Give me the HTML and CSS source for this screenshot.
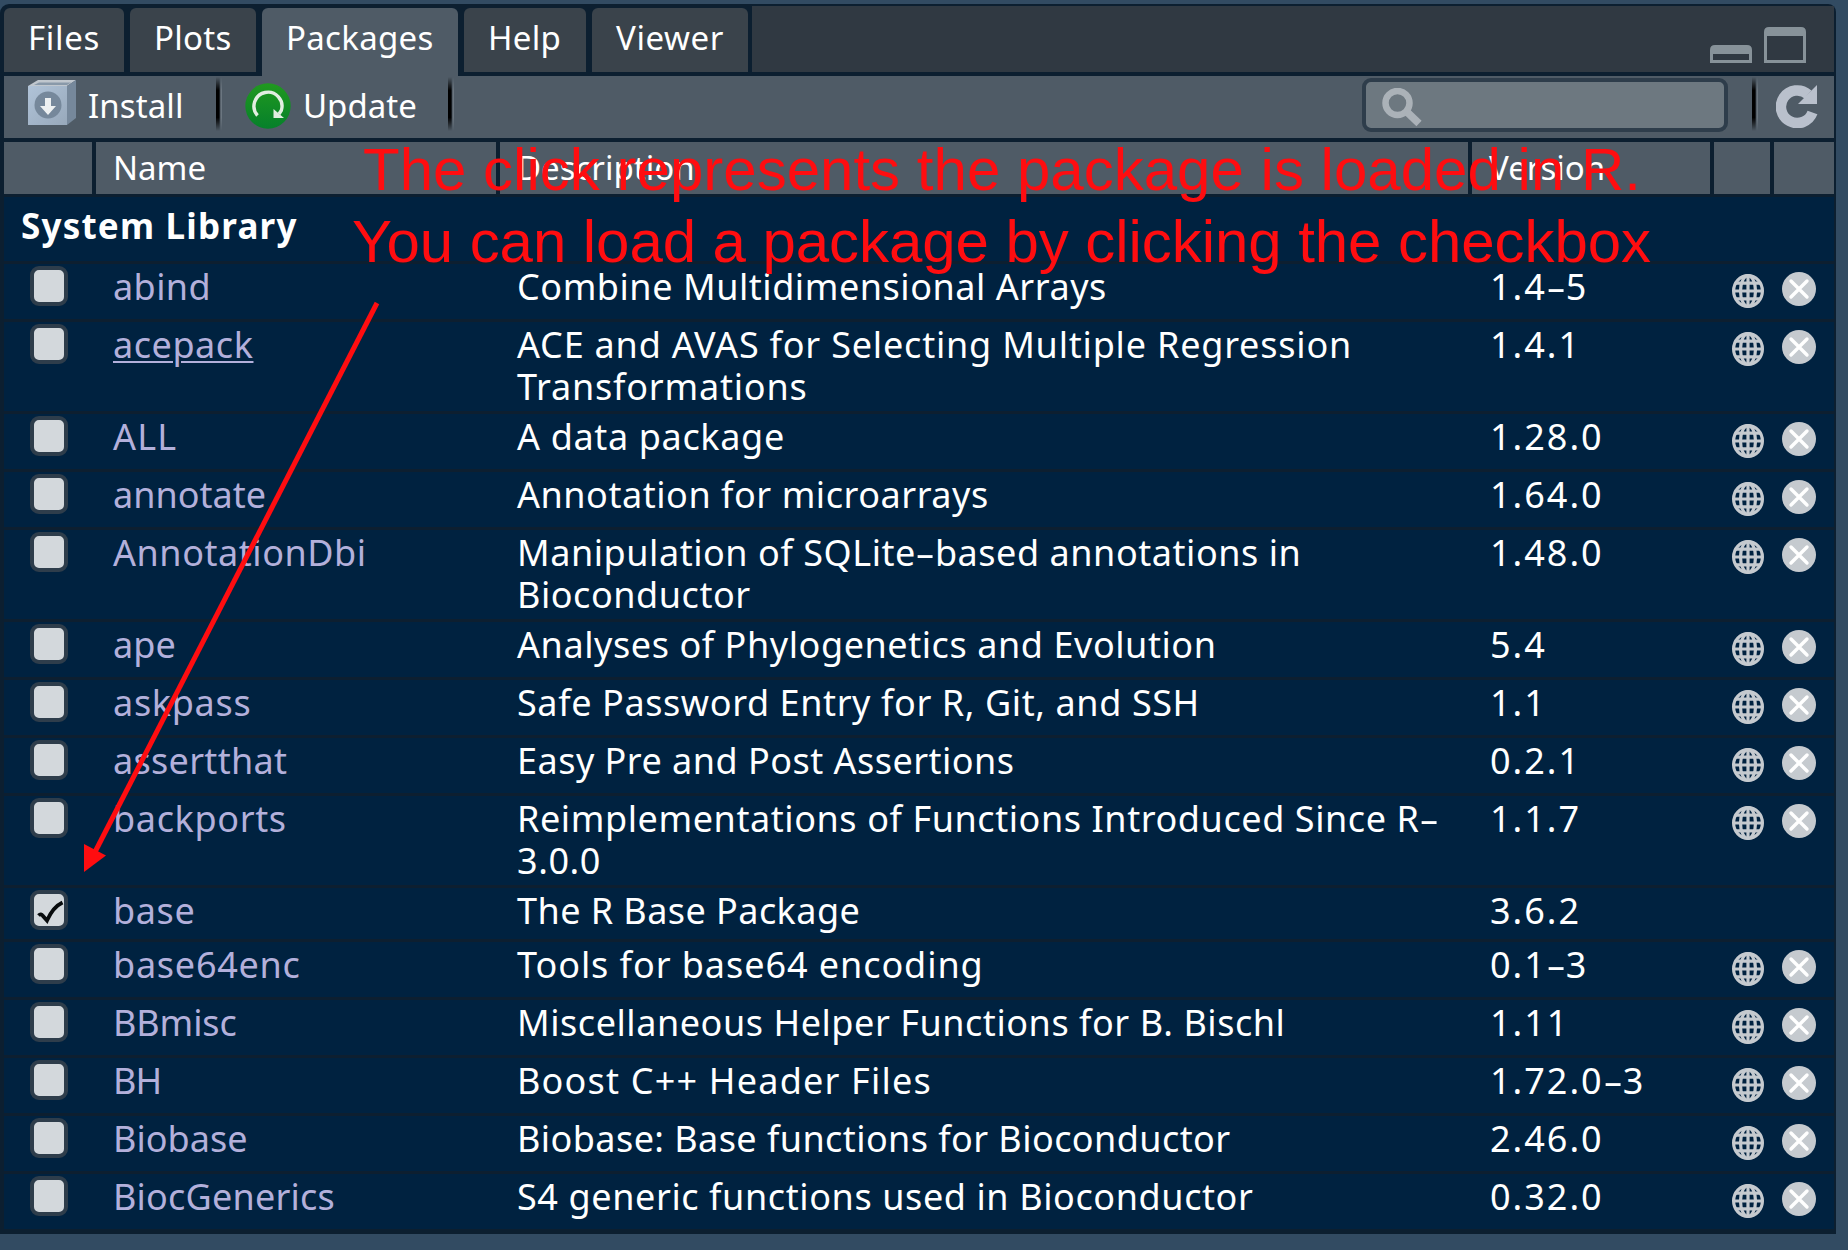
FILE: index.html
```html
<!DOCTYPE html>
<html lang="en">
<head>
<meta charset="utf-8">
<title>Packages</title>
<link rel="stylesheet" href="styles.css">
</head>
<body>
<svg class="defs" aria-hidden="true">
  <symbol id="globe" viewBox="0 0 32 34">
    <ellipse cx="16" cy="17" rx="14.4" ry="15.4"/><ellipse cx="16" cy="17" rx="7.5" ry="15.4"/>
    <path d="M16 1v32M1 17h30M3 9.200h26M3 24.800h26"/>
  </symbol>
  <symbol id="remove" viewBox="0 0 34 34">
    <circle cx="17" cy="17" r="17" fill="#c5cacf"/>
    <path d="M9 9l16 16M25 9L9 25" stroke="#fff" stroke-width="3.400" stroke-linecap="round"/>
  </symbol>
</svg>
<main class="pane">
  <nav class="tabs">
    <a class="tab t-files"><span>Files</span></a>
    <a class="tab t-plots"><span>Plots</span></a>
    <a class="tab t-packages active"><span>Packages</span></a>
    <a class="tab t-help"><span>Help</span></a>
    <a class="tab t-viewer"><span>Viewer</span></a>
    <div class="window-buttons">
      <svg width="42" height="18" viewBox="0 0 42 18"><path fill="#879299" fill-rule="evenodd" d="M0 18V5Q0 0 5 0H37Q42 0 42 5V18ZM3 9V15H39V9Z"/></svg>
      <svg width="42" height="36" viewBox="0 0 42 36"><path fill="#879299" fill-rule="evenodd" d="M0 36V5Q0 0 5 0H37Q42 0 42 5V36ZM3 9V33H39V9Z"/></svg>
    </div>
  </nav>
  <div class="toolbar">
    <svg class="install-icon" width="48" height="45" viewBox="0 0 48 45">
      <defs><linearGradient id="front" x2="1" y2="1"><stop stop-color="#b0c3d8"/><stop offset="1" stop-color="#98a9bb"/></linearGradient></defs>
      <path d="M0 6L10 0H48L39 6Z" fill="#c0c7ce"/><path d="M6 5L11 2.500H43L39 5Z" fill="#8999a9"/>
      <path d="M39 6L48 0V38L39 45Z" fill="#76889b"/><path d="M0 6H39V45H0Z" fill="url(#front)"/>
      <circle cx="20" cy="25" r="13.500" fill="#76889b"/><path d="M17 18h6v8h5l-8 9-8-9h5Z" fill="#edf0f1"/>
    </svg>
    <span class="install">Install</span>
    <i class="separator"></i>
    <svg class="update-icon" width="46" height="46" viewBox="0 0 46 46">
      <defs><linearGradient id="green" x2="0" y2="1"><stop stop-color="#20991f"/><stop offset="1" stop-color="#06802b"/></linearGradient></defs>
      <circle cx="23" cy="23" r="22.700" fill="url(#green)"/>
      <path d="M12.500 32.500A14 14 0 1 1 36.300 27.500L34 31" fill="none" stroke="#e2eee1" stroke-width="3.400"/>
      <path d="M28.500 26V35H39Z" fill="#e2eee1"/>
    </svg>
    <span class="update">Update</span>
    <i class="separator"></i>
    <div class="search"><svg width="40" height="39" viewBox="0 0 40 39"><circle cx="15.500" cy="15" r="12" fill="none" stroke="#abb2b8" stroke-width="6.500"/><path d="M25 24L37 35.500" stroke="#abb2b8" stroke-width="7.500"/></svg></div>
    <i class="separator last"></i>
    <svg class="refresh" width="42" height="44" viewBox="0 0 42 44"><path d="M36.500 28.500A16.300 16.300 0 1 1 32 10.500" fill="none" stroke="#b9c0cc" stroke-width="10.500"/><path d="M41 1V20H22Z" fill="#b9c0cc"/></svg>
  </div>
  <div class="grid head"><div></div><div>Name</div><div>Description</div><div>Version</div><div></div><div></div></div>
  <h1>System Library</h1>
  <div class="rows">
    <div class="grid row r-abind"><i class="check"></i><a>abind</a><p>Combine Multidimensional Arrays</p><b>1.4<span class="dash">-</span>5</b><svg class="globe"><use href="#globe"/></svg><svg class="remove"><use href="#remove"/></svg></div>
    <div class="grid row r-acepack"><i class="check"></i><a class="hover">acepack</a><p>ACE and AVAS for Selecting Multiple Regression Transformations</p><b>1.4.1</b><svg class="globe"><use href="#globe"/></svg><svg class="remove"><use href="#remove"/></svg></div>
    <div class="grid row r-all"><i class="check"></i><a>ALL</a><p>A data package</p><b>1.28.0</b><svg class="globe"><use href="#globe"/></svg><svg class="remove"><use href="#remove"/></svg></div>
    <div class="grid row r-annotate"><i class="check"></i><a>annotate</a><p>Annotation for microarrays</p><b>1.64.0</b><svg class="globe"><use href="#globe"/></svg><svg class="remove"><use href="#remove"/></svg></div>
    <div class="grid row r-dbi"><i class="check"></i><a>AnnotationDbi</a><p>Manipulation of SQLite<span class="dash">-</span>based annotations in Bioconductor</p><b>1.48.0</b><svg class="globe"><use href="#globe"/></svg><svg class="remove"><use href="#remove"/></svg></div>
    <div class="grid row r-ape"><i class="check"></i><a>ape</a><p>Analyses of Phylogenetics and Evolution</p><b>5.4</b><svg class="globe"><use href="#globe"/></svg><svg class="remove"><use href="#remove"/></svg></div>
    <div class="grid row r-askpass"><i class="check"></i><a>askpass</a><p>Safe Password Entry for R, Git, and SSH</p><b>1.1</b><svg class="globe"><use href="#globe"/></svg><svg class="remove"><use href="#remove"/></svg></div>
    <div class="grid row r-assert"><i class="check"></i><a>assertthat</a><p>Easy Pre and Post Assertions</p><b>0.2.1</b><svg class="globe"><use href="#globe"/></svg><svg class="remove"><use href="#remove"/></svg></div>
    <div class="grid row r-backports"><i class="check"></i><a>backports</a><p>Reimplementations of Functions Introduced Since R<span class="dash">-</span>3.0.0</p><b>1.1.7</b><svg class="globe"><use href="#globe"/></svg><svg class="remove"><use href="#remove"/></svg></div>
    <div class="grid row r-base"><i class="check"><svg width="30" height="32" viewBox="0 0 30 32"><path d="M4.500 21.500Q7 19 9 22L13 26.500Q19 13 28.500 8.500" fill="none" stroke="#080b0d" stroke-width="3.800"/></svg></i><a>base</a><p>The R Base Package</p><b>3.6.2</b></div>
    <div class="grid row r-base64"><i class="check"></i><a>base64enc</a><p>Tools for base64 encoding</p><b>0.1<span class="dash">-</span>3</b><svg class="globe"><use href="#globe"/></svg><svg class="remove"><use href="#remove"/></svg></div>
    <div class="grid row r-bbmisc"><i class="check"></i><a>BBmisc</a><p>Miscellaneous Helper Functions for B. Bischl</p><b>1.11</b><svg class="globe"><use href="#globe"/></svg><svg class="remove"><use href="#remove"/></svg></div>
    <div class="grid row r-bh"><i class="check"></i><a>BH</a><p>Boost C++ Header Files</p><b>1.72.0<span class="dash">-</span>3</b><svg class="globe"><use href="#globe"/></svg><svg class="remove"><use href="#remove"/></svg></div>
    <div class="grid row r-biobase"><i class="check"></i><a>Biobase</a><p>Biobase: Base functions for Bioconductor</p><b>2.46.0</b><svg class="globe"><use href="#globe"/></svg><svg class="remove"><use href="#remove"/></svg></div>
    <div class="grid row r-generics"><i class="check"></i><a>BiocGenerics</a><p>S4 generic functions used in Bioconductor</p><b>0.32.0</b><svg class="globe"><use href="#globe"/></svg><svg class="remove"><use href="#remove"/></svg></div>
  </div>
</main>
<svg class="annotation" width="1848" height="1250">
  <text x="363" y="190" textLength="1278">The click represents the package is loaded in R.</text>
  <text x="352" y="262" textLength="1299">You can load a package by clicking the checkbox</text>
  <path d="M377 303L95 852" stroke-width="5"/>
  <path d="M84 844L106 855.500L84 872Z" class="tip"/>
</svg>
</body>
</html>
```

FILE: styles.css
```css
* { box-sizing: border-box; }
body {
  margin: 0;
  width: 1848px;
  height: 1250px;
  overflow: hidden;
  background: #324b62;
  font-family: "Noto Sans", sans-serif;
  color: #fff;
}
svg { display: block; flex: none; }
.defs { position: absolute; width: 0; height: 0; }
.pane {
  width: 1836px;
  height: 1230px;
  margin-top: 4px;
  padding: 2px 2px 0 4px;
  background: #0c1f30;
  border-radius: 9px 8px 0 0;
  overflow: hidden;
}
.tabs {
  display: flex;
  gap: 6px;
  height: 66px;
  background: linear-gradient(90deg, #0c1f30 748px, #303942 748px);
}
.tab {
  height: 64px;
  margin-top: 2px;
  padding: 5px 0 0 24px;
  background: #3a434b;
  border-radius: 6px 6px 0 0;
  font-size: 33px;
  line-height: 50px;
  letter-spacing: .3px;
}
.tab.active { background: #4f5b66; height: 68px; }
.t-files { width: 120px; letter-spacing: .7px; }
.t-plots { width: 126px; }
.t-packages { width: 196px; }
.t-help { width: 122px; }
.t-viewer { width: 156px; letter-spacing: .6px; }
.window-buttons { display: flex; align-items: flex-end; gap: 12px; margin-left: auto; padding: 0 28px 9px 0; }
.toolbar {
  display: flex;
  height: 62px;
  margin-top: 4px;
  background: #4f5b66;
  font-size: 33px;
  line-height: 60px;
}
.install-icon { margin: 4px 12px 0 24px; }
.install { width: 128px; letter-spacing: .1px; }
.update-icon { margin: 7px 12px 0 23px; }
.update { width: 145px; }
.separator {
  width: 6px;
  height: 54px;
  margin-top: 1px;
  background: linear-gradient(90deg, #000 0 3px, #303942 4px, #7b8690 5px, #5b6670 6px);
  -webkit-mask-image: linear-gradient(transparent, #000 25%, #000 75%, transparent);
  mask-image: linear-gradient(transparent, #000 25%, #000 75%, transparent);
}
.search {
  width: 366px;
  height: 54px;
  margin: 2px 24px 0 auto;
  padding: 6px 0 0 16px;
  background: #6d7880;
  border: 4px solid #2e3d4b;
  border-radius: 9px;
}
.refresh { margin: 8px 16px 0 18px; }
.grid { display: grid; grid-template-columns: 88px 400px 968px 238px 56px 60px; column-gap: 4px; }
.head { height: 52px; margin-top: 4px; font-size: 33px; line-height: 52px; }
.head div { background: #4f5b66; padding-left: 17px; }
h1 { margin: 3px 0 0; height: 64px; padding-left: 17px; background: #002240; font-size: 35px; line-height: 57px; letter-spacing: 1.2px; }
.row { min-height: 58px; border-top: 3px solid #0d1f30; background: #002240; align-items: start; font-size: 36px; line-height: 42px; }
.row.r-base { min-height: 54px; }
.row a, .row p, .row b { margin: 0; padding: 2px 0 3px 17px; font-weight: 400; }
.row b { padding-left: 18px; letter-spacing: 2px; }
.row a { color: #b3b0db; }
.row .hover { text-decoration: underline; text-decoration-thickness: 2px; text-underline-offset: 3px; }
.dash { display: inline-block; width: 18px; text-align: center; letter-spacing: 0; margin-right: 1px; transform: scaleX(1.7); }

/* tracking of the name and description cells */
.r-abind a { letter-spacing: .4px; }
.r-abind p { letter-spacing: .55px; }
.r-acepack a { letter-spacing: .55px; }
.r-acepack p { letter-spacing: .8px; }
.r-all a { letter-spacing: 1.2px; }
.r-all p { letter-spacing: .65px; }
.r-annotate a { letter-spacing: 0; }
.r-annotate p { letter-spacing: .54px; }
.r-dbi a { letter-spacing: .55px; }
.r-dbi p { letter-spacing: .55px; }
.r-ape a { letter-spacing: .1px; }
.r-ape p { letter-spacing: .57px; }
.r-askpass a { letter-spacing: .7px; }
.r-askpass p { letter-spacing: .6px; }
.r-assert a { letter-spacing: .3px; }
.r-assert p { letter-spacing: .48px; }
.r-backports a { letter-spacing: .65px; }
.r-backports p { letter-spacing: .58px; }
.r-base a { letter-spacing: .6px; }
.r-base p { letter-spacing: .44px; }
.r-base64 a { letter-spacing: .75px; }
.r-base64 p { letter-spacing: .94px; }
.r-bbmisc a { letter-spacing: -.1px; }
.r-bbmisc p { letter-spacing: .55px; }
.r-bh a { letter-spacing: -1px; }
.r-bh p { letter-spacing: 1.2px; }
.r-biobase a { letter-spacing: .05px; }
.r-biobase p { letter-spacing: .43px; }
.r-generics a { letter-spacing: .2px; }
.r-generics p { letter-spacing: .6px; }

.check { width: 38px; height: 40px; margin: 2px 0 0 26px; background: #d3d8dc; border: 4px solid #2e3d4b; border-radius: 9px; }
.globe { width: 32px; height: 34px; margin: 10px 0 0 18px; fill: none; stroke: #c5cacf; stroke-width: 3.2; }
.remove { width: 34px; height: 34px; margin: 8px 0 0 8px; }
.annotation { position: absolute; left: 0; top: 0; font: 60px "Liberation Sans", sans-serif; fill: #ff0d10; stroke: none; }
.annotation path { stroke: #ff0d10; }
.annotation .tip { stroke: none; }
```
